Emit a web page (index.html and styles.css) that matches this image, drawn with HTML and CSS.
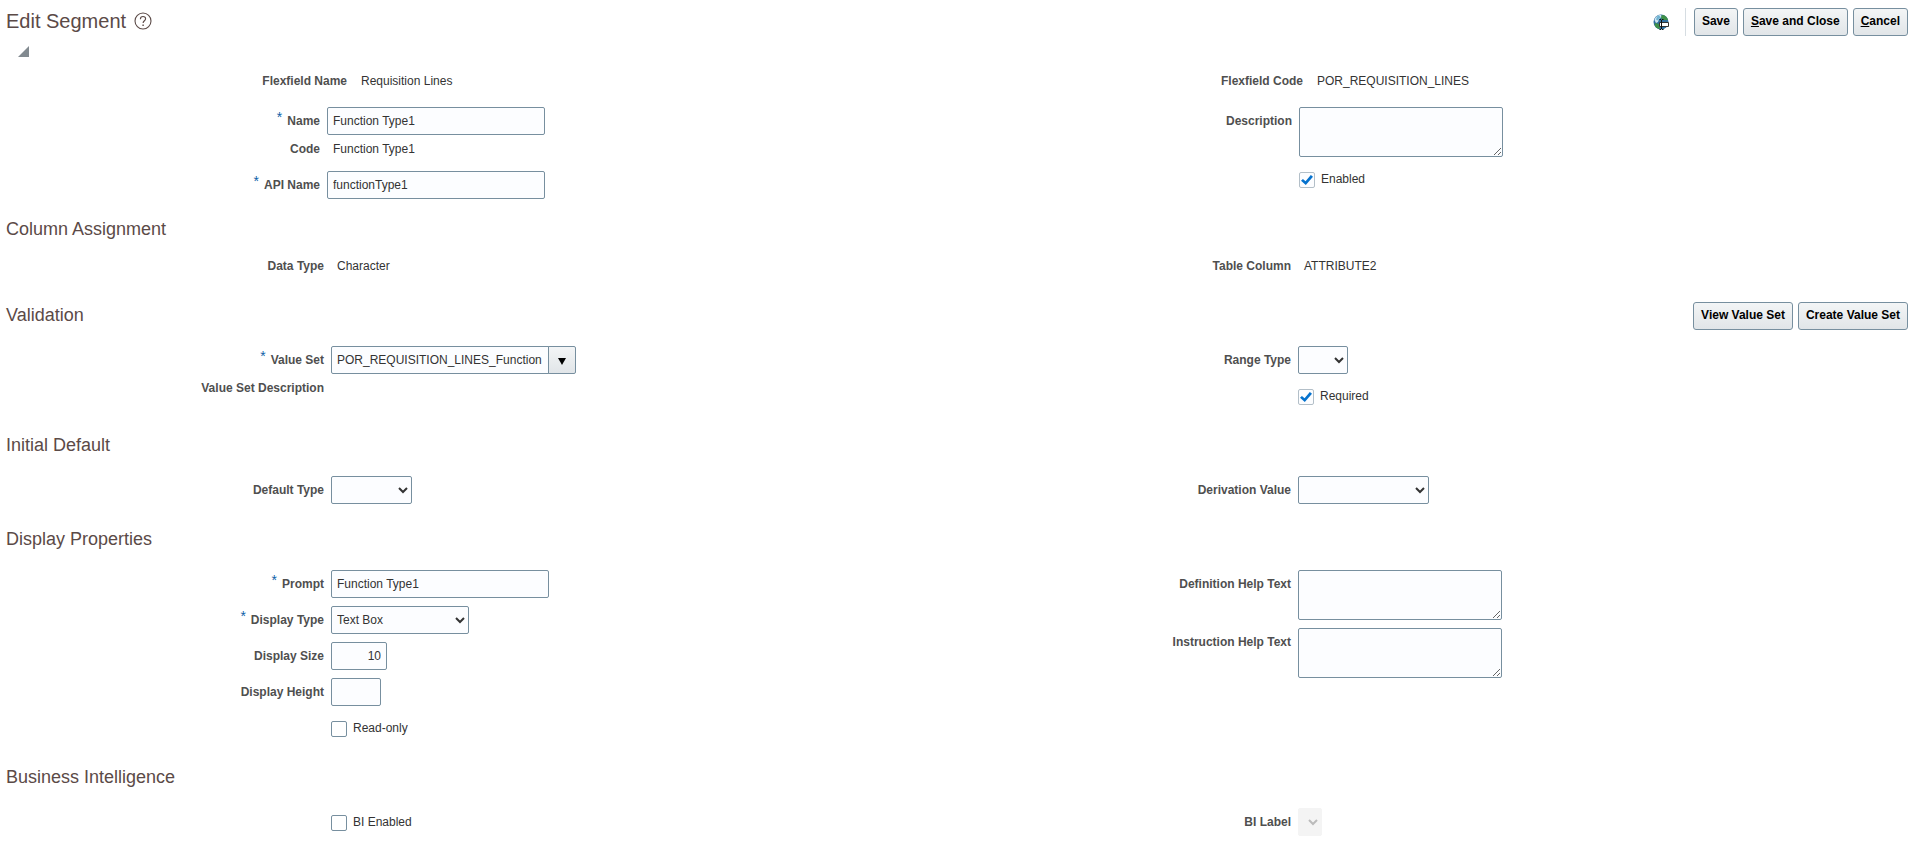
FILE: index.html
```html
<!DOCTYPE html>
<html lang="en">
	<head>
		<title>Edit Segment</title>
		<meta charset="utf-8">
		<meta name="viewport" content="width=device-width, initial-scale=1">
		<link rel="stylesheet" href="styles.css">
	</head>
	<body>
		<header class="bar page-bar">
			<h1>Edit Segment</h1>
			<button class="icon-btn help" type="button" aria-label="Help">
				<svg width="18" height="18" viewBox="0 0 18 18" fill="none" stroke="#5b4a47" stroke-width="1.1">
					<circle cx="9" cy="9" r="8"/>
					<path d="M6.4 7.200C6.400 5.400 7.500 4.500 9 4.500s2.600.9 2.600 2.300c0 2-2.500 2-2.500 4.300"/>
					<path d="M9.100 12.400v1.500" stroke-width="1.400"/>
				</svg>
			</button>
			<div class="actions">
				<button class="icon-btn globe" type="button" aria-label="Edit translations">
					<svg width="17" height="17" viewBox="0 0 17 17">
						<circle cx="8" cy="8" r="7.500" fill="#2f6f9f"/>
						<path d="M1.500 6C2 3 5 1 8 1l1 2-3 2-1 3-2 1z" fill="#cfe6f2"/>
						<path d="M9 1c3 0 5.500 2 6 5h-4L8.500 5 8 3zM2 9l4 1 1 4-1 1C3 14 1 12 2 9z" fill="#3f9048"/>
						<path d="M6 1.500l2 2-2 1-1 2-2-1 1-3z" fill="#6fb3d2"/>
						<path d="M6.500 8.500h9v4h-9z" fill="#fff" stroke="#333"/>
						<path d="M8.500 6v9M6.500 5.500h1.500M9 5.500h1.500M6.500 15.500h1.500M9 15.500h1.500" stroke="#111" fill="none"/>
					</svg>
				</button>
				<span class="divider"></span>
				<button class="btn" type="button">Save</button>
				<button class="btn" type="button"><u>S</u>ave and Close</button>
				<button class="btn" type="button"><u>C</u>ancel</button>
			</div>
		</header>
		<button class="icon-btn disclose" type="button" aria-label="Collapse">
			<svg width="11" height="11" viewBox="0 0 11 11"><path d="M11 0v11H0z" fill="#828a90"/></svg>
		</button>

		<!-- Flexfield the segment belongs to -->
		<div class="form flexfield">
			<div class="col">
				<div class="row text"><span class="label">Flexfield Name</span><span class="value">Requisition Lines</span></div>
			</div>
			<div class="col">
				<div class="row text"><span class="label">Flexfield Code</span><span class="value">POR_REQUISITION_LINES</span></div>
			</div>
		</div>

		<div class="form segment">
			<div class="col">
				<div class="row"><label class="label required" for="name">Name</label><input class="field" type="text" id="name" value="Function Type1"></div>
				<div class="row text"><span class="label">Code</span><span class="value">Function Type1</span></div>
				<div class="row"><label class="label required" for="apiName">API Name</label><input class="field" type="text" id="apiName" value="functionType1"></div>
			</div>
			<div class="col">
				<div class="row"><label class="label" for="description">Description</label><textarea class="field" id="description"></textarea></div>
				<div class="row check"><input type="checkbox" id="enabled" checked><label for="enabled">Enabled</label></div>
			</div>
		</div>

		<div class="bar"><h2>Column Assignment</h2></div>
		<div class="form column-assignment">
			<div class="col">
				<div class="row text"><span class="label">Data Type</span><span class="value">Character</span></div>
			</div>
			<div class="col">
				<div class="row text"><span class="label">Table Column</span><span class="value">ATTRIBUTE2</span></div>
			</div>
		</div>

		<div class="bar">
			<h2>Validation</h2>
			<div class="actions">
				<button class="btn" type="button">View Value Set</button>
				<button class="btn" type="button">Create Value Set</button>
			</div>
		</div>
		<div class="form validation">
			<div class="col">
				<div class="row">
					<label class="label required" for="valueSet">Value Set</label>
					<input class="field combo" type="text" id="valueSet" value="POR_REQUISITION_LINES_Function">
					<button class="combo-btn" type="button" aria-label="Search value sets">
						<svg width="8" height="7" viewBox="0 0 8 7"><path d="M0 0h8L4 7z"/></svg>
					</button>
				</div>
				<div class="row text"><span class="label">Value Set Description</span></div>
			</div>
			<div class="col">
				<div class="row"><label class="label" for="rangeType">Range Type</label><select class="field w-xs" id="rangeType"><option></option></select></div>
				<div class="row check"><input type="checkbox" id="required" checked><label for="required">Required</label></div>
			</div>
		</div>

		<div class="bar"><h2>Initial Default</h2></div>
		<div class="form initial-default">
			<div class="col">
				<div class="row"><label class="label" for="defaultType">Default Type</label><select class="field w-sm" id="defaultType"><option></option></select></div>
			</div>
			<div class="col">
				<div class="row"><label class="label" for="derivation">Derivation Value</label><select class="field w-md" id="derivation"><option></option></select></div>
			</div>
		</div>

		<div class="bar"><h2>Display Properties</h2></div>
		<div class="form display">
			<div class="col">
				<div class="row"><label class="label required" for="prompt">Prompt</label><input class="field" type="text" id="prompt" value="Function Type1"></div>
				<div class="row"><label class="label required" for="displayType">Display Type</label><select class="field w-lg" id="displayType"><option>Text Box</option></select></div>
				<div class="row"><label class="label" for="displaySize">Display Size</label><input class="field number" type="text" id="displaySize" value="10"></div>
				<div class="row"><label class="label" for="displayHeight">Display Height</label><input class="field w-xs" type="text" id="displayHeight"></div>
				<div class="row check"><input type="checkbox" id="readOnly"><label for="readOnly">Read-only</label></div>
			</div>
			<div class="col">
				<div class="row"><label class="label" for="definitionHelp">Definition Help Text</label><textarea class="field" id="definitionHelp"></textarea></div>
				<div class="row"><label class="label" for="instructionHelp">Instruction Help Text</label><textarea class="field" id="instructionHelp"></textarea></div>
			</div>
		</div>

		<div class="bar"><h2>Business Intelligence</h2></div>
		<div class="form intelligence">
			<div class="col">
				<div class="row check"><input type="checkbox" id="biEnabled"><label for="biEnabled">BI Enabled</label></div>
			</div>
			<div class="col">
				<div class="row"><label class="label" for="biLabel">BI Label</label><select class="field empty" id="biLabel" disabled><option></option></select></div>
			</div>
		</div>
	</body>
</html>
```
FILE: styles.css
```css
* {box-sizing: border-box}

:root {
	--border: #778f9f;
	--heading: #5b4a47;
	--field: #fcfdff;
}

body {
	margin: 0;
	font-family: "Liberation Sans", Arial, sans-serif;
	font-size: 12px;
	line-height: 20px;
	color: #333333;
	background-color: white;
}

input, select, textarea, button {
	font-family: inherit;
	font-size: inherit;
	color: inherit;
}

/* Title bars */
.bar {
	display: flex;
	align-items: center;
	height: 28px;
	padding-left: 6px;
}
.page-bar {
	height: 42px;
}
h1, h2 {
	margin: 0;
	font-weight: normal;
	color: var(--heading);
}
h1 {
	font-size: 20px;
}
h2 {
	font-size: 18px;
}
.actions {
	display: flex;
	align-items: center;
	gap: 5px;
	margin-left: auto;
	padding-top: 2px;
}
.divider {
	width: 1px;
	height: 28px;
	margin: 0 3px 0 10px;
	background-color: #d6dde2;
}

/* Buttons */
.btn {
	height: 28px;
	padding: 0 7px 2px;
	border: 1px solid var(--border);
	border-radius: 3px;
	background: linear-gradient(#f3f5f6, #e1e5e8);
	font-weight: bold;
	color: black;
	white-space: nowrap;
}
.icon-btn {
	display: flex;
	padding: 0;
	border: 0;
	background: none;
}
.help {
	margin-left: 8px;
}
.disclose {
	margin: 4px 0 14px 18px;
}

/* Two column forms, labels right aligned against the fields */
.form {
	--label: 324px;
	display: grid;
	grid-template-columns: 967fr 941fr;
}
.row {
	display: flex;
	align-items: flex-start;
	margin-bottom: 8px;
}
.row.text {
	margin-bottom: 0;
}
.label {
	width: var(--label);
	margin-right: 7px;
	padding-top: 4px;
	text-align: right;
	font-weight: bold;
	color: #4f4f4f;
}
.text .label {
	padding-top: 0;
}
.value {
	margin-left: 6px;
}
.required::before {
	content: "*";
	margin-right: 5px;
	font-weight: normal;
	font-size: 14px;
	vertical-align: 3px;
	line-height: 10px;
	color: #0f5fa8;
}

/* Fields */
.field {
	width: 218px;
	height: 28px;
	padding: 0 5px;
	border: 1px solid var(--border);
	border-radius: 2px;
	background-color: var(--field);
}
textarea.field {
	display: block;
	width: 204px;
	height: 50px;
}
select.field {
	padding: 0 1px;
}
.field.w-xs {width: 50px}
.field.w-sm {width: 81px}
.field.w-md {width: 131px}
.field.w-lg {width: 138px}
.field.number {
	width: 56px;
	text-align: right;
}
.field.empty {
	width: 24px;
	border-color: #f4f4f4;
	background-color: #f4f4f4;
	color: #bbbbbb;
	opacity: 1;
}
.field.combo {
	border-radius: 2px 0 0 2px;
}
.combo-btn {
	display: flex;
	align-items: center;
	justify-content: center;
	width: 28px;
	height: 28px;
	margin-left: -1px;
	padding: 2px 0 0;
	border: 1px solid var(--border);
	border-radius: 0 2px 2px 0;
	background: linear-gradient(#f3f5f6, #e1e5e8);
}

/* Checkboxes */
.check {
	gap: 6px;
	padding: 7px 0 0 calc(var(--label) + 7px);
}
.check label {
	line-height: 14px;
}
input[type="checkbox"] {
	appearance: none;
	display: grid;
	place-content: center;
	width: 16px;
	height: 16px;
	margin: 0;
	border: 1px solid var(--border);
	border-radius: 2px;
	background-color: white;
}
input[type="checkbox"]:checked {
	border-color: #b3bfc8;
	background-color: var(--field);
}
input[type="checkbox"]:checked::before {
	content: "";
	width: 12px;
	height: 10px;
	background-color: #0572ce;
	clip-path: polygon(0 58%, 16% 40%, 38% 62%, 82% 0, 100% 18%, 40% 100%);
}

/* Spacing of each form */
.flexfield {
	--label: 347px;
	grid-template-columns: 956fr 952fr;
	margin-bottom: 16px;
}
.flexfield .label {
	margin-right: 8px;
}
.segment {
	--label: 320px;
	grid-template-columns: 972fr 936fr;
	margin-bottom: 8px;
}
.segment .row.text {
	margin: -4px 0 12px;
}
.column-assignment {
	margin: 13px 0 25px;
}
.validation {
	margin: 17px 0 18px;
}
.validation .row.text {
	margin-top: -4px;
}
.initial-default {
	margin: 17px 0 13px;
}
.display {
	margin: 17px 0 18px;
}
.intelligence {
	margin-top: 17px;
}
```
